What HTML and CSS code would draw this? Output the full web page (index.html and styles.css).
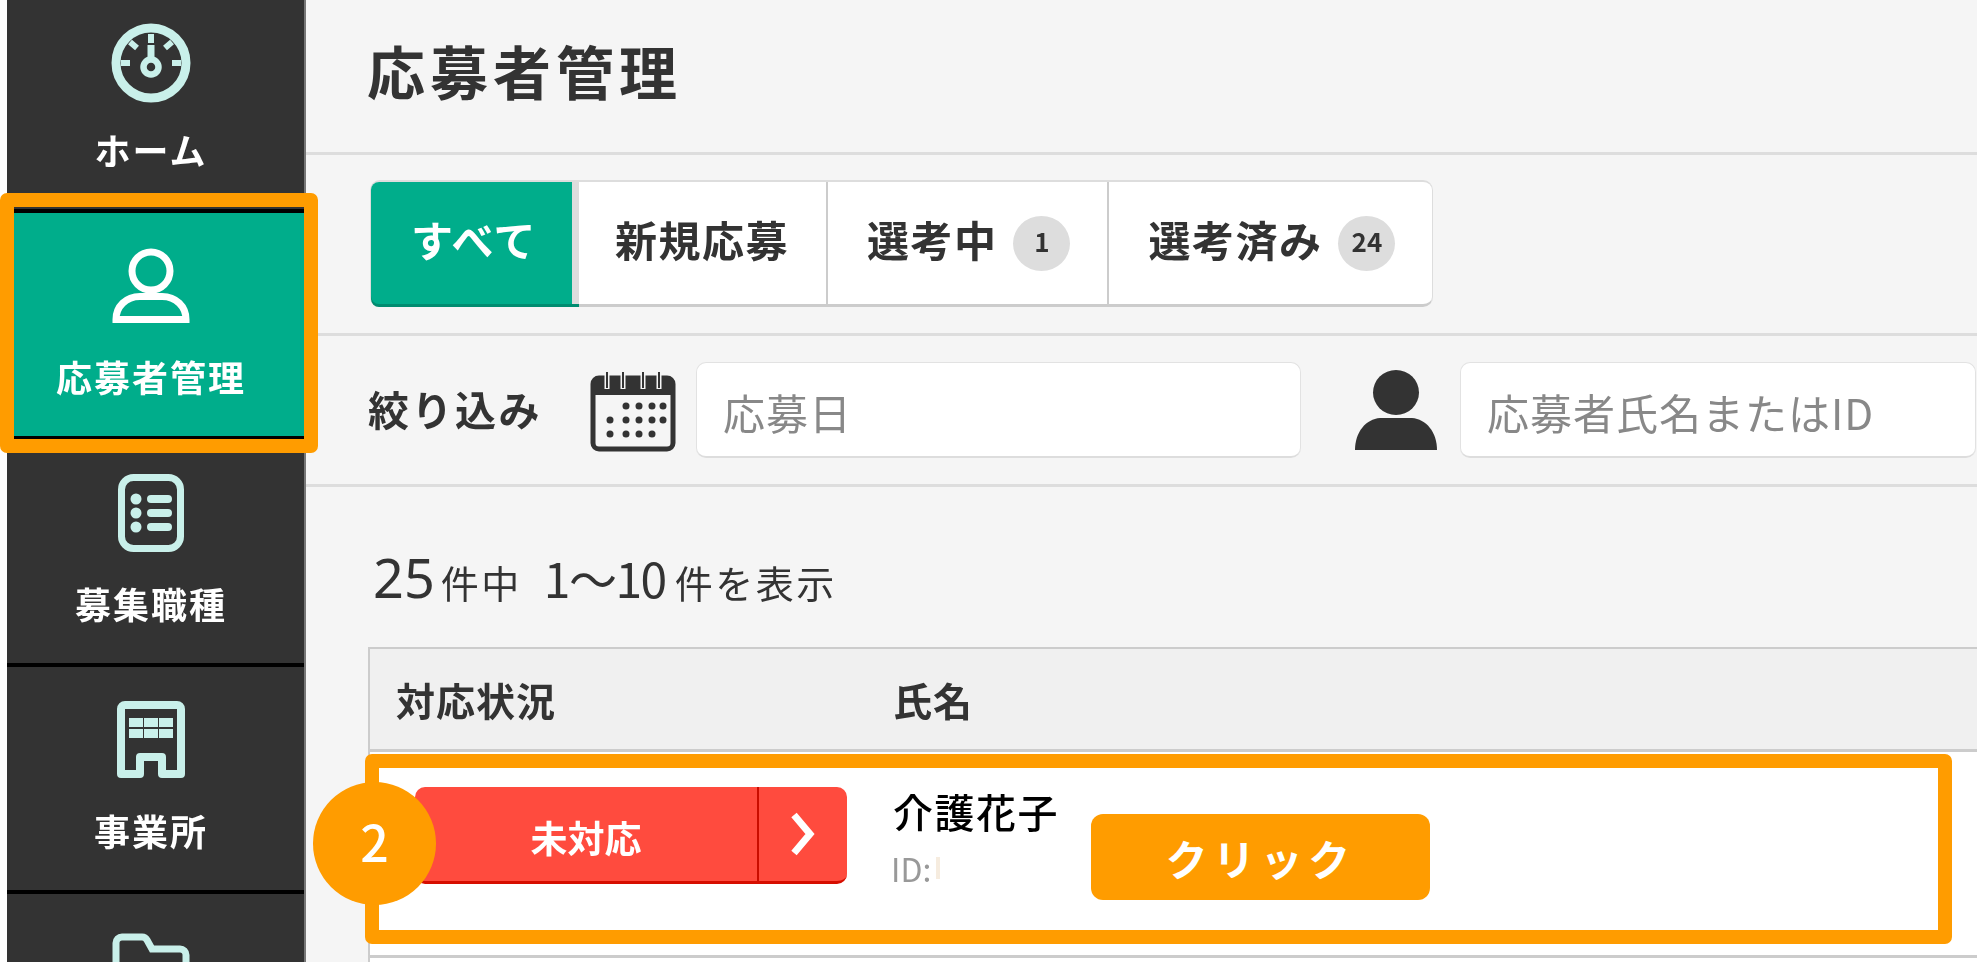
FILE: index.html
```html
<!DOCTYPE html>
<html lang="ja">
<head>
	<meta charset="utf-8">
	<title>応募者管理</title>
	<link rel="stylesheet" href="styles.css">
</head>
<body>
<nav class="sidebar">
	<a class="nav-item">
		<svg class="nav-icon" viewBox="0 0 80 80">
			<circle cx="40" cy="43" r="35" fill="none" stroke="currentColor" stroke-width="9"/>
			<path d="M40 14v9M19 22l7 6M61 22l-7 6M10 43h9M70 43h-9" fill="none" stroke="currentColor" stroke-width="6"/>
			<path d="M36.500 25h7v16h-7z" fill="currentColor"/>
			<circle cx="40" cy="47" r="7.500" fill="none" stroke="currentColor" stroke-width="6.500"/>
		</svg>
		<span class="nav-label">ホーム</span>
	</a>
	<a class="nav-item active">
		<svg class="nav-icon" viewBox="0 0 80 80">
			<circle cx="40" cy="24" r="19" fill="none" stroke="currentColor" stroke-width="7"/>
			<path d="M5 72.500c0-13 10-23 24-23h22c14 0 24 10 24 23z" fill="none" stroke="currentColor" stroke-width="7"/>
		</svg>
		<span class="nav-label">応募者管理</span>
	</a>
	<a class="nav-item">
		<svg class="nav-icon" viewBox="0 0 80 80">
			<rect x="10.500" y="3.500" width="59" height="71" rx="12" fill="none" stroke="currentColor" stroke-width="7"/>
			<path d="M40 25h17M40 39h17M40 53h17" fill="none" stroke="currentColor" stroke-width="8" stroke-linecap="round"/>
			<circle cx="25" cy="25" r="5.500" fill="currentColor"/>
			<circle cx="25" cy="39" r="5.500" fill="currentColor"/>
			<circle cx="25" cy="53" r="5.500" fill="currentColor"/>
		</svg>
		<span class="nav-label">募集職種</span>
	</a>
	<a class="nav-item">
		<svg class="nav-icon" viewBox="0 0 80 80">
			<path d="M10 8a4 4 0 0 1 4-4h52a4 4 0 0 1 4 4v65H51V56H29v17H10z" fill="none" stroke="currentColor" stroke-width="8" stroke-linejoin="round"/>
			<path d="M18 17h14v9H18zM33 17h14v9H33zM48 17h14v9H48zM18 28h14v9H18zM33 28h14v9H33zM48 28h14v9H48z" fill="currentColor"/>
		</svg>
		<span class="nav-label">事業所</span>
	</a>
	<a class="nav-item folder">
		<svg class="nav-icon" viewBox="0 0 80 80">
			<path d="M5 72V12a6 6 0 0 1 6-6h20a6 6 0 0 1 5 3l5 9h28a6 6 0 0 1 6 6v48a4 4 0 0 1-4 4H9a4 4 0 0 1-4-4z" fill="none" stroke="currentColor" stroke-width="7"/>
		</svg>
	</a>
</nav>

<main class="main">
	<h1 class="page-title">応募者管理</h1>

	<div class="tabs-bar">
		<div class="tabs">
			<a class="tab current">すべて</a>
			<a class="tab">新規応募</a>
			<a class="tab">選考中<span class="count">1</span></a>
			<a class="tab">選考済み<span class="count">24</span></a>
		</div>
	</div>

	<div class="filter-bar">
		<span class="filter-label">絞り込み</span>
		<svg class="calendar-icon" viewBox="0 0 86 84">
			<rect x="3" y="10" width="80" height="71" rx="6" fill="none" stroke="#333" stroke-width="5"/>
			<path d="M3 10h80v17H3z" fill="#333"/>
			<path d="M17 3v18M33 3v18M53 3v18M69 3v18" stroke="#f5f5f5" stroke-width="5"/>
			<path d="M17 4v16M33 4v16M53 4v16M69 4v16" stroke="#333" stroke-width="2"/>
			<g fill="#333">
				<circle cx="36" cy="38" r="3.500"/><circle cx="49" cy="38" r="3.500"/><circle cx="62" cy="38" r="3.500"/><circle cx="73" cy="38" r="3.500"/>
				<circle cx="20" cy="52" r="3.500"/><circle cx="36" cy="52" r="3.500"/><circle cx="49" cy="52" r="3.500"/><circle cx="62" cy="52" r="3.500"/><circle cx="73" cy="52" r="3.500"/>
				<circle cx="20" cy="66" r="3.500"/><circle cx="36" cy="66" r="3.500"/><circle cx="49" cy="66" r="3.500"/><circle cx="62" cy="66" r="3.500"/>
			</g>
		</svg>
		<div class="field date-field">応募日</div>
		<svg class="person-icon" viewBox="0 0 84 80">
			<ellipse cx="42" cy="22.500" rx="23" ry="22.500" fill="#333"/>
			<path d="M1 80C1 62 12 49 26 48h32c14 1 25 14 25 32z" fill="#333"/>
		</svg>
		<div class="field name-field">応募者氏名またはID</div>
	</div>

	<p class="result-count"><b>25</b>件中<b class="range">1〜10</b>件を表示</p>

	<div class="table">
		<div class="row head">
			<div class="col-status">対応状況</div>
			<div class="col-name">氏名</div>
		</div>
		<div class="row">
			<div class="col-status">
				<a class="status-button">
					<span class="status-text">未対応</span>
					<span class="status-arrow">
						<svg viewBox="0 0 26 44" width="26" height="44"><path d="M4 3l16 19L4 41" fill="none" stroke="#fff" stroke-width="7"/></svg>
					</span>
				</a>
			</div>
			<div class="col-name">
				<div class="applicant-name">介護花子</div>
				<div class="applicant-id">ID:<span class="id-mask"></span></div>
			</div>
		</div>
		<div class="row last"></div>
	</div>
</main>

<!-- annotations drawn over the page -->
<div class="frame frame-nav"></div>
<div class="frame frame-row"></div>
<div class="step">2</div>
<div class="click-note">クリック</div>
</body>
</html>
```

FILE: styles.css
```css
*
{
	box-sizing: border-box;
}

html,body
{
	height: 100%;
	margin: 0;
	overflow: hidden;
}

body
{
	position: relative;
	display: flex;
	padding-left: 7px;
	background: #fff;
	color: #333;
	font-family: "Noto Sans CJK JP", "Noto Sans", sans-serif;
}

/* the page under the annotations is a soft, scaled-up capture */
.sidebar,
.main
{
	filter: blur(0.6px);
}

/* sidebar */
.sidebar
{
	flex: none;
	width: 299px;
	margin-top: -14px;
	border-right: 2px solid #777;
	background: #333;
}

.nav-item
{
	display: flex;
	flex-direction: column;
	align-items: center;
	height: 227px;
	padding: 34px 9px 0 0;
	border-bottom: 4px solid #000;
	color: #c9f0ea;
}

.nav-item.active
{
	background: #00ad8b;
	color: #fff;
}

.nav-item.folder
{
	height: 68px;
	padding-top: 37px;
	border-bottom: 0;
	overflow: hidden;
}

.nav-icon
{
	display: block;
	flex: none;
	width: 80px;
	height: 80px;
	overflow: visible;
}

.nav-label
{
	margin-top: 29px;
	color: #fff;
	font-size: 36px;
	font-weight: 700;
	letter-spacing: 2px;
	line-height: 40px;
}

/* main area */
.main
{
	flex: 1;
	min-width: 0;
	background: #f5f5f5;
}

.page-title
{
	height: 155px;
	margin: 0;
	padding: 32px 0 0 61px;
	border-bottom: 3px solid #ddd;
	font-size: 58px;
	font-weight: 700;
	letter-spacing: 5px;
	line-height: 76px;
}

.tabs-bar
{
	height: 181px;
	padding: 25px 0 0 64px;
	border-bottom: 3px solid #ddd;
}

.tabs
{
	display: inline-flex;
	height: 127px;
	border: 1px solid #ddd;
	border-top-width: 2px;
	border-bottom: 3px solid #ccc;
	border-radius: 10px;
	background: #fff;
}

.tab
{
	display: flex;
	align-items: center;
	padding: 0 37px 9px 39px;
	border-left: 2px solid #ccc;
	font-size: 42px;
	font-weight: 700;
	letter-spacing: 1.500px;
}

.tab:first-child
{
	padding: 0 35px 9px 40px;
	border-left: 0;
	border-right: 7px solid #ddd;
	border-radius: 8px 0 0 8px;
	box-shadow: 0 3px 0 #008c70;
	background: #00ad8b;
	color: #fff;
}

.tab:nth-child(2)
{
	padding-left: 36px;
	border-left: 0;
}

.count
{
	display: flex;
	align-items: center;
	justify-content: center;
	width: 57px;
	height: 55px;
	margin: 9px 0 0 16px;
	padding-bottom: 6px;
	border-radius: 50%;
	background: #ddd;
	font-size: 26px;
	letter-spacing: 0;
}

.filter-bar
{
	display: flex;
	align-items: center;
	height: 151px;
	padding-left: 62px;
	border-bottom: 3px solid #ddd;
}

.filter-label
{
	width: 222px;
	padding-bottom: 4px;
	font-size: 41px;
	font-weight: 700;
	letter-spacing: 2.500px;
}

.calendar-icon
{
	flex: none;
	width: 86px;
	height: 84px;
	margin-right: 20px;
}

.field
{
	display: flex;
	align-items: center;
	height: 96px;
	padding: 4px 0 0 26px;
	border: 1px solid #e2e2e2;
	border-bottom: 2px solid #ddd;
	border-radius: 10px;
	background: #fff;
	color: #888;
	font-size: 42px;
	letter-spacing: 1px;
}

.date-field
{
	flex: none;
	width: 605px;
	margin-right: 53px;
}

.person-icon
{
	flex: none;
	width: 84px;
	height: 80px;
	margin-right: 22px;
}

.name-field
{
	flex: none;
	width: 516px;
}

.result-count
{
	display: flex;
	align-items: baseline;
	height: 160px;
	margin: 0;
	padding: 60px 0 0 67px;
	font-size: 38px;
	letter-spacing: 2.500px;
	line-height: 60px;
}

.result-count b
{
	margin-right: 6px;
	font-family: "Noto Sans", sans-serif;
	font-size: 54px;
	font-weight: 400;
	letter-spacing: 0;
}

.result-count .range
{
	margin: 0 9px 0 22px;
	font-family: "Noto Sans CJK JP", sans-serif;
	font-size: 48px;
	letter-spacing: -1.500px;
}

/* table */
.table
{
	margin-left: 62px;
	background: #fff;
}

.row
{
	display: flex;
	height: 206px;
	border-left: 2px solid #ccc;
	border-bottom: 3px solid #ccc;
}

.row.head
{
	align-items: center;
	height: 105px;
	border-top: 2px solid #ccc;
	background: #f0f0f0;
	font-size: 39px;
	font-weight: 700;
	letter-spacing: 1px;
}

.row.last
{
	height: 4px;
	border-bottom: 0;
}

.col-status
{
	flex: none;
	width: 523px;
	padding-left: 26px;
}

.row:not(.head) .col-status
{
	padding: 35px 0 0 45px;
}

.col-name
{
	flex: 1;
}

.status-button
{
	display: flex;
	width: 432px;
	height: 97px;
	border-bottom: 3px solid #d60e00;
	border-radius: 10px;
	background: #ff4b3e;
	color: #fff;
}

.status-text
{
	display: flex;
	flex: 1;
	align-items: center;
	justify-content: center;
	padding-top: 5px;
	font-size: 37px;
	font-weight: 700;
}

.status-arrow
{
	display: flex;
	flex: none;
	align-items: center;
	justify-content: center;
	width: 90px;
	border-left: 2px solid #c90d00;
}

.applicant-name
{
	margin-top: 34px;
	color: #000;
	font-size: 40px;
	font-weight: 500;
	letter-spacing: 1.500px;
	line-height: 50px;
}

.applicant-id
{
	display: flex;
	align-items: center;
	margin: 14px 0 0 -2px;
	color: #999;
	font-size: 32px;
	line-height: 36px;
}

.id-mask
{
	width: 4px;
	height: 22px;
	margin-left: 5px;
	background: #f6ecdf;
}

/* annotations */
.frame
{
	position: absolute;
	border: 14px solid #ff9c00;
	border-radius: 7px;
}

.frame-nav
{
	top: 193px;
	left: 0;
	width: 318px;
	height: 260px;
}

.frame-row
{
	top: 754px;
	left: 365px;
	width: 1587px;
	height: 190px;
}

.step
{
	position: absolute;
	top: 782px;
	left: 313px;
	display: flex;
	align-items: center;
	justify-content: center;
	width: 123px;
	height: 123px;
	padding-bottom: 7px;
	border-radius: 50%;
	background: #ff9c00;
	color: #fff;
	font-size: 50px;
	font-weight: 500;
}

.click-note
{
	position: absolute;
	top: 814px;
	left: 1091px;
	display: flex;
	align-items: center;
	justify-content: center;
	width: 339px;
	height: 86px;
	border-radius: 12px;
	background: #ff9c00;
	color: #fff;
	font-size: 42px;
	font-weight: 700;
	letter-spacing: 5.500px;
}
```
